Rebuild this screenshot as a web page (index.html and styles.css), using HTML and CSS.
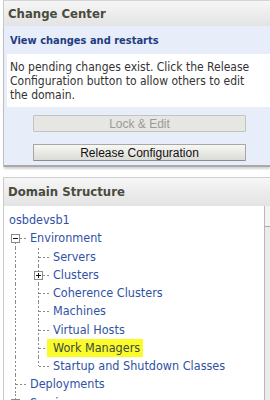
FILE: index.html
```html
<!DOCTYPE html>
<html lang="en">
<head>
    <meta charset="UTF-8">
    <meta name="viewport" content="width=device-width, initial-scale=1.0">
    <title>Administration Console</title>
    <link rel="stylesheet" href="styles.css">
</head>
<body>

    <!-- Change Center -->
    <div class="panel change-center">
        <div class="panel-title">Change Center</div>
        <div class="cc-body">
            <div class="cc-link">View changes and restarts</div>
            <div class="cc-message">
                No pending changes exist. Click the Release Configuration button to allow others to edit the domain.
            </div>
            <div class="cc-buttons">
                <button class="btn" disabled>Lock &amp; Edit</button>
                <button class="btn">Release Configuration</button>
            </div>
        </div>
    </div>

    <!-- Domain Structure -->
    <div class="panel domain">
        <div class="panel-title">Domain Structure</div>
        <div class="domain-body">
            <div class="tree">
                <div class="node"><a class="root">osbdevsb1</a></div>
                <div class="node">
                    <span class="cell open"><span class="toggle minus"></span></span>
                    <a>Environment</a>
                </div>
                <div class="node">
                    <span class="cell pipe"></span>
                    <span class="cell branch"></span>
                    <a>Servers</a>
                </div>
                <div class="node">
                    <span class="cell pipe"></span>
                    <span class="cell branch"><span class="toggle plus"></span></span>
                    <a>Clusters</a>
                </div>
                <div class="node">
                    <span class="cell pipe"></span>
                    <span class="cell branch"></span>
                    <a>Coherence Clusters</a>
                </div>
                <div class="node">
                    <span class="cell pipe"></span>
                    <span class="cell branch"></span>
                    <a>Machines</a>
                </div>
                <div class="node">
                    <span class="cell pipe"></span>
                    <span class="cell branch"></span>
                    <a>Virtual Hosts</a>
                </div>
                <div class="node">
                    <span class="cell pipe"></span>
                    <span class="cell branch"></span>
                    <a class="marked">Work Managers</a>
                </div>
                <div class="node">
                    <span class="cell pipe"></span>
                    <span class="cell elbow"></span>
                    <a>Startup and Shutdown Classes</a>
                </div>
                <div class="node">
                    <span class="cell branch"></span>
                    <a>Deployments</a>
                </div>
                <div class="node">
                    <span class="cell branch"><span class="toggle plus"></span></span>
                    <a>Services</a>
                </div>
            </div>
            <div class="scroll"><div class="thumb"></div></div>
        </div>
    </div>

</body>
</html>
```

FILE: styles.css
```css
* {
    margin: 0;
    padding: 0;
    box-sizing: border-box;
}

body {
    background: #fff;
    font-family: 'DejaVu Sans Condensed', 'DejaVu Sans', sans-serif;
    font-size: 12px;
    color: #222;
    overflow: hidden;
    height: 400px;
}

/* Panels */
.panel {
    margin-left: 3px;
    border-left: 1px solid #c9c9c9;
    border-top: 1px solid #d4d4d4;
}

.panel-title {
    height: 25px;
    padding-left: 4px;
    line-height: 25px;
    font-size: 13px;
    font-weight: bold;
    color: #4a4a3e;
    background: linear-gradient(#f6f6f6, #e3e3e3);
}

/* Change Center */
.cc-body {
    background: #e8eef9;
    padding-bottom: 4px;
    border-bottom: 2px solid #a9a9a9;
    box-shadow: 0 2px 2px rgba(0, 0, 0, 0.18);
}

.cc-link {
    height: 28px;
    line-height: 30px;
    padding-left: 6px;
    font-size: 11px;
    font-weight: bold;
    color: #1d3d80;
}

.cc-message {
    background: #fff;
    margin-left: 3px;
    padding: 6px 8px 5px 3px;
    line-height: 14px;
    color: #333;
}

.cc-buttons {
    display: flex;
    flex-direction: column;
    gap: 12px;
    padding: 8px 0 0 29px;
}

.btn {
    width: 213px;
    height: 17px;
    font-family: 'Liberation Sans', Arial, sans-serif;
    font-size: 12px;
    color: #111;
    background: linear-gradient(#f7f7f5, #dcdcd6);
    border: 1px solid #a7a7a3;
    border-bottom-color: #8c8c88;
    border-radius: 1px;
}

.btn:disabled {
    color: #9a9a96;
    background: #e6e6e2;
    border-color: #c3c3bf;
}

/* Domain Structure */
.domain {
    margin-top: 10px;
    border-top-color: #cfcfcf;
}

.domain .panel-title {
    height: 28px;
    line-height: 27px;
}

.domain-body {
    display: flex;
    height: 300px;
}

.tree {
    flex: 1;
    padding: 5px 0 0 1px;
    font-size: 12.5px;
}

.node {
    display: flex;
    height: 18.25px;
    line-height: 18px;
    white-space: nowrap;
}

.node a {
    position: relative;
    margin-left: 2px;
    color: #2f52a6;
}

.node a.root {
    margin-left: 4px;
}

.node a.marked {
    background: #fbfb2a;
    color: #3a4a40;
    margin-left: -4px;
    padding: 0 3px 0 6px;
}

/* Tree connectors */
.cell {
    position: relative;
    width: 23px;
    flex-shrink: 0;
}

.cell::before,
.cell::after {
    content: '';
    position: absolute;
}

.pipe::before,
.branch::before {
    left: 10px;
    top: 0;
    bottom: 0;
    width: 1px;
    background: repeating-linear-gradient(to bottom, #8a8a8a 0 2px, transparent 2px 4px);
}

.elbow::before {
    left: 10px;
    top: 0;
    height: 9px;
    width: 1px;
    background: repeating-linear-gradient(to bottom, #8a8a8a 0 2px, transparent 2px 4px);
}

.open::before {
    left: 10px;
    top: 9px;
    bottom: 0;
    width: 1px;
    background: repeating-linear-gradient(to bottom, #8a8a8a 0 2px, transparent 2px 4px);
}

.branch::after,
.elbow::after,
.open::after {
    left: 11px;
    right: 0;
    top: 9px;
    height: 1px;
    background: repeating-linear-gradient(to right, #8a8a8a 0 2px, transparent 2px 4px);
}

.toggle {
    position: absolute;
    left: 6px;
    top: 5px;
    width: 9px;
    height: 9px;
    border: 1px solid #8a8a8a;
    background: #fff;
    z-index: 1;
}

.toggle::before,
.toggle::after {
    content: '';
    position: absolute;
    background: #111;
}

.toggle::before {
    left: 1px;
    top: 3px;
    width: 5px;
    height: 1px;
}

.plus::after {
    left: 3px;
    top: 1px;
    width: 1px;
    height: 5px;
}

/* Scrollbar edge */
.scroll {
    width: 6px;
    border-left: 1px solid #b9b9b9;
    background: #f3f3f3;
    padding-top: 20px;
}

.thumb {
    height: 100%;
    border-top: 1px solid #a9a9a9;
    background: #ebebeb;
}
```
